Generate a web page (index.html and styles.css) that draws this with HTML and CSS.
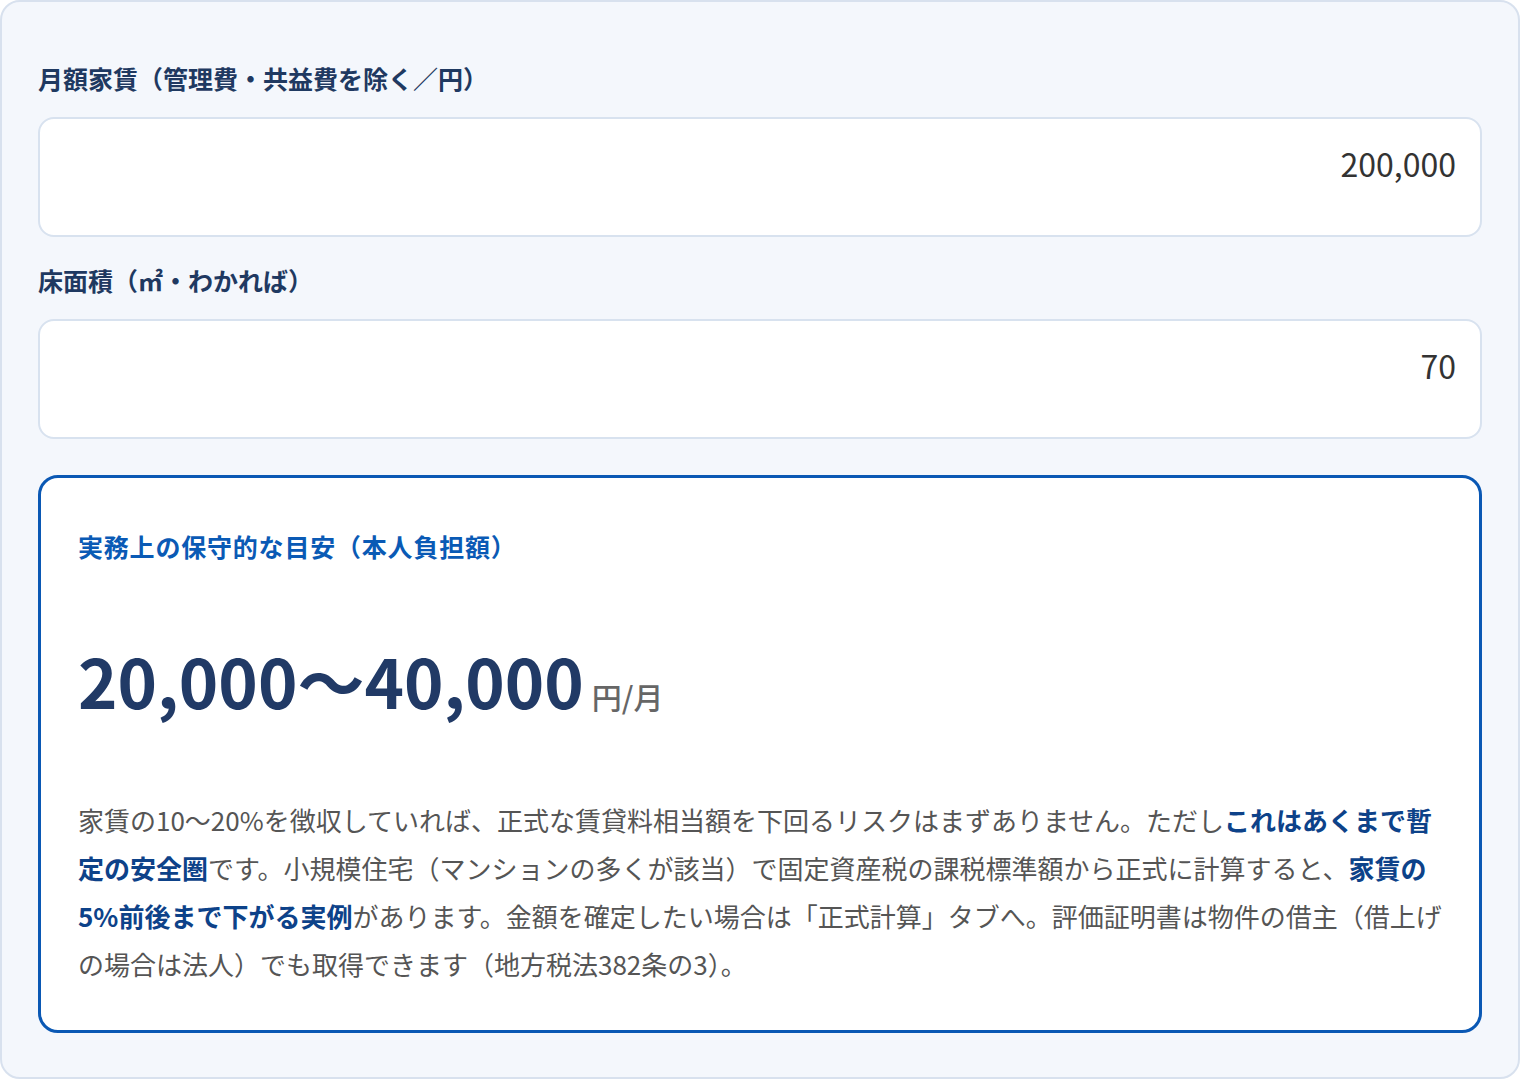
FILE: index.html
```html
<!DOCTYPE html>
<html lang="ja">
<head>
    <meta charset="UTF-8">
    <meta name="viewport" content="width=device-width, initial-scale=1.0">
    <title>家賃の目安</title>
    <link rel="stylesheet" href="styles.css">
</head>
<body>
    <div class="panel">
        <div class="form-group">
            <label for="rent">月額家賃（管理費・共益費を除く／円）</label>
            <input type="text" id="rent" value="200,000">
        </div>

        <div class="form-group">
            <label for="area">床面積（㎡・わかれば）</label>
            <input type="text" id="area" value="70">
        </div>

        <div class="result">
            <div class="result-title">実務上の保守的な目安（本人負担額）</div>
            <div class="result-value">20,000〜40,000<span class="unit">円/月</span></div>
            <p class="result-note">家賃の10〜20%を徴収していれば、正式な賃貸料相当額を下回るリスクはまずありません。ただし<strong>これはあくまで暫定の安全圏</strong>です。小規模住宅（マンションの多くが該当）で固定資産税の課税標準額から正式に計算すると、<strong>家賃の5%前後まで下がる実例</strong>があります。金額を確定したい場合は「正式計算」タブへ。評価証明書は物件の借主（借上げの場合は法人）でも取得できます（地方税法382条の3）。</p>
        </div>
    </div>
</body>
</html>
```

FILE: styles.css
```css
* {
    box-sizing: border-box;
    margin: 0;
    padding: 0;
    font-family: 'Noto Sans CJK JP', 'Noto Sans', sans-serif;
}

body {
    background-color: #ffffff;
}

.panel {
    width: 1520px;
    height: 1079px;
    background-color: #f4f7fc;
    border: 2px solid #d8e1ee;
    border-radius: 20px;
    padding: 58px 36px 45px;
}

.form-group {
    margin-bottom: 25px;
}

label {
    display: block;
    color: #1f3961;
    font-size: 25px;
    font-weight: 700;
    line-height: 36px;
    margin-bottom: 21px;
}

input {
    display: block;
    width: 100%;
    height: 120px;
    padding: 15px 24px 43px;
    border: 2px solid #d8e2ef;
    border-radius: 16px;
    background-color: #ffffff;
    color: #333333;
    font-size: 32px;
    text-align: right;
    outline: none;
}

.result {
    margin-top: 36px;
    background-color: #ffffff;
    border: 3px solid #0a58b4;
    border-radius: 20px;
    padding: 50px 37px 42px;
}

.result-title {
    color: #0a5ab5;
    font-size: 25px;
    font-weight: 700;
    line-height: 36px;
    letter-spacing: 0.8px;
}

.result-value {
    margin-top: 76px;
    color: #213a66;
    font-size: 67px;
    font-weight: 700;
    line-height: 80px;
}

.unit {
    margin-left: 8px;
    color: #666666;
    font-size: 30px;
    font-weight: 500;
    line-height: 1;
}

.result-note {
    margin-top: 76px;
    color: #555555;
    font-size: 26px;
    line-height: 48px;
}

.result-note strong {
    color: #0d4289;
    font-weight: 700;
}
```
